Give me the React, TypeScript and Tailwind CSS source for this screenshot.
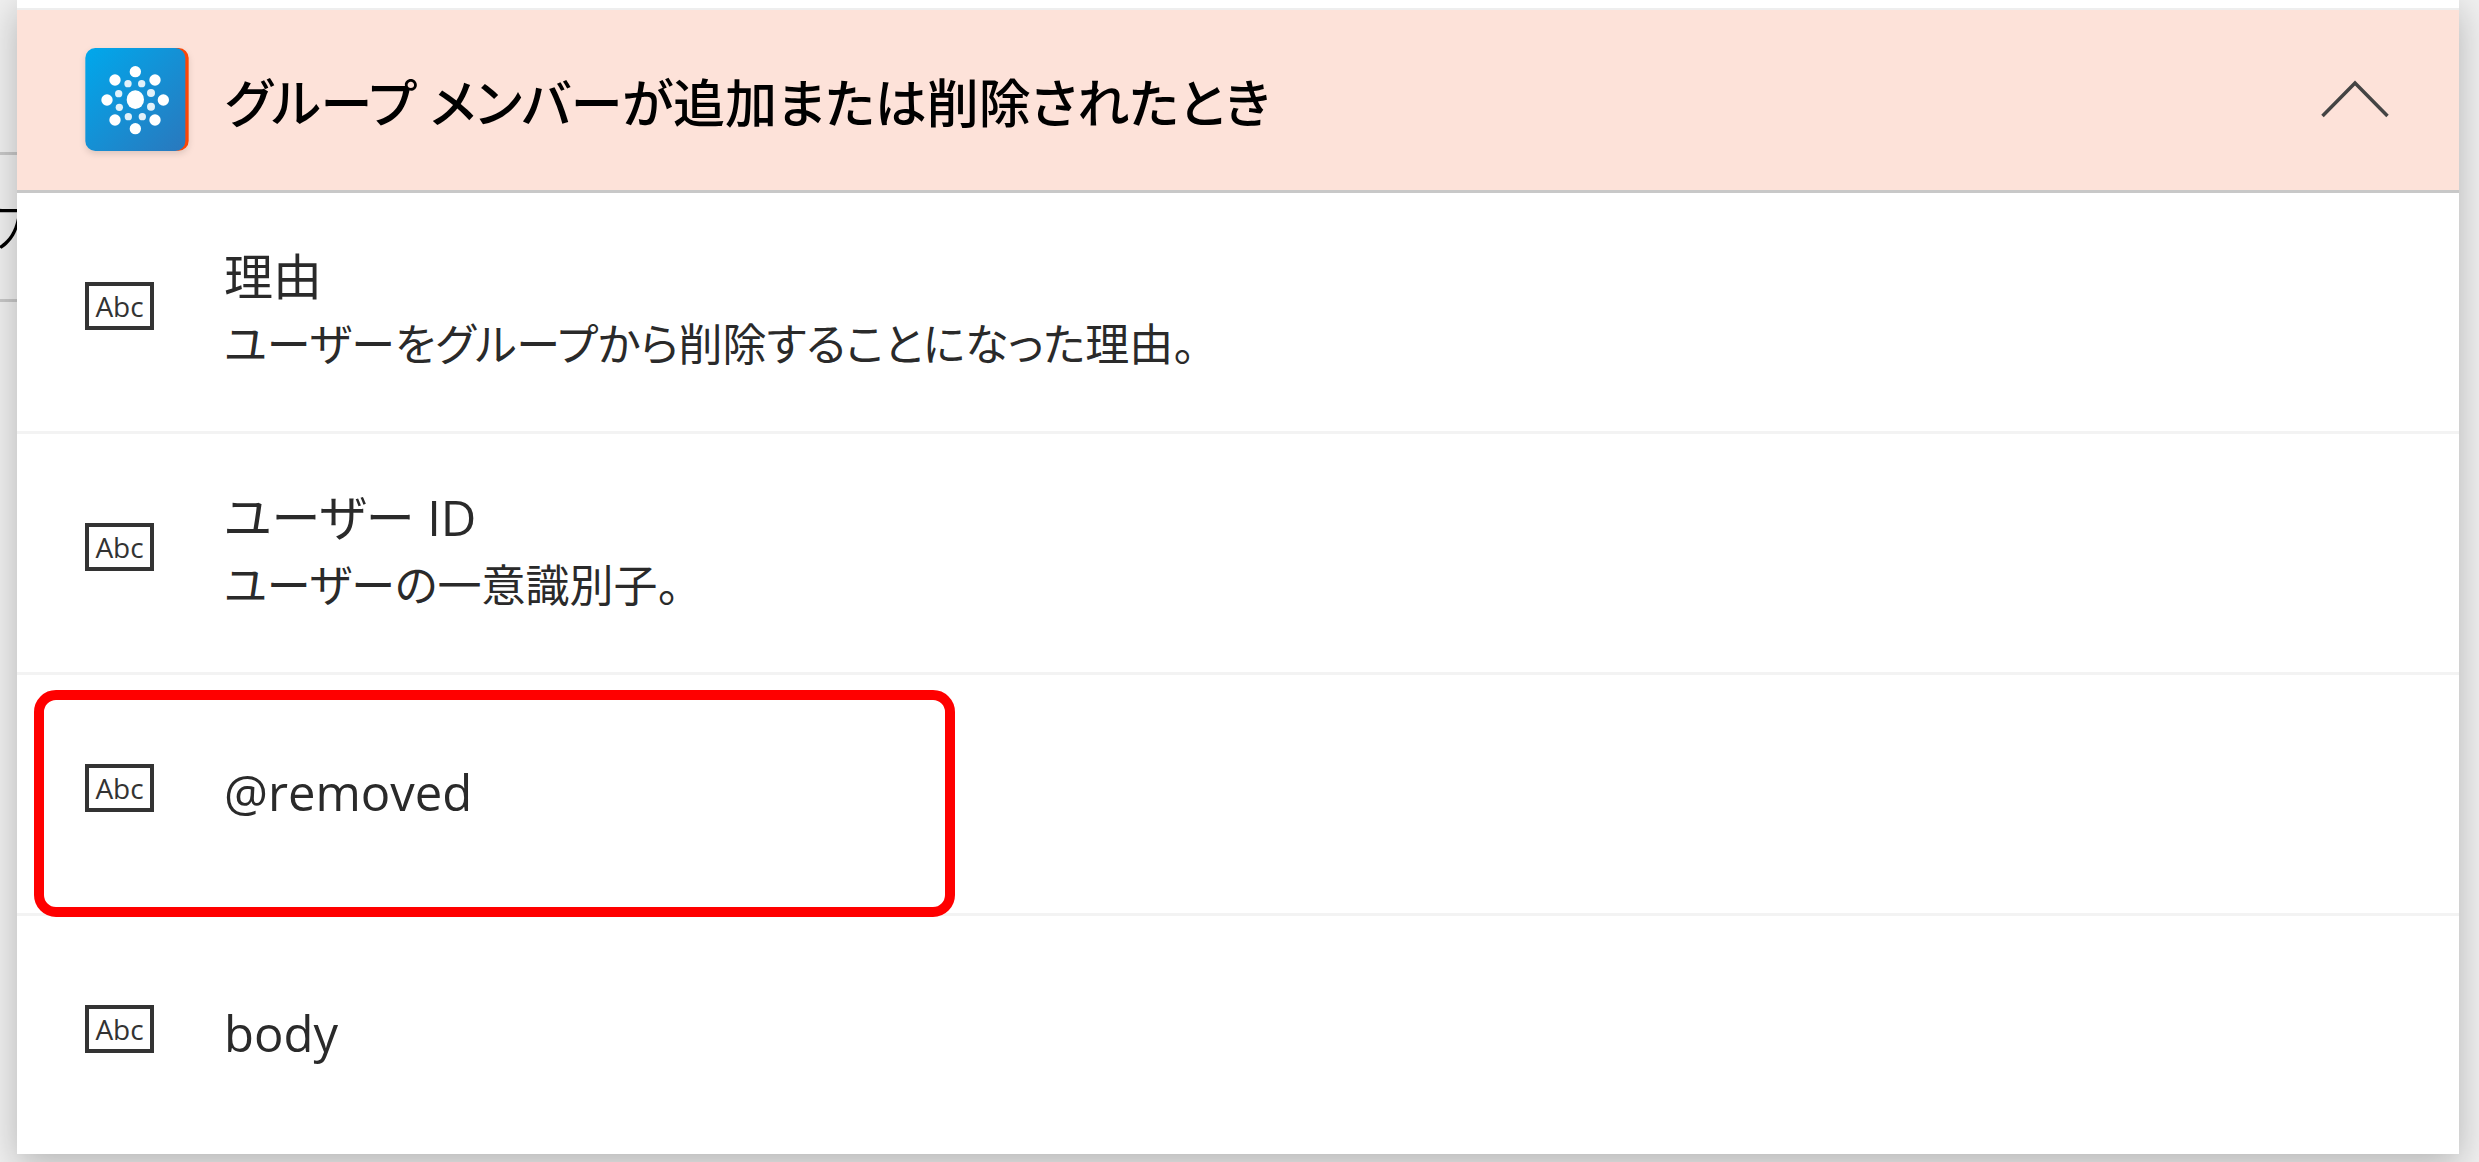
type Output = {
  id: string;
  title: string;
  description?: string;
  highlighted?: boolean;
};

const outputs: Output[] = [
  {
    id: 'reason',
    title: '理由',
    description: 'ユーザーをグループから削除することになった理由。',
  },
  { id: 'user-id', title: 'ユーザー ID', description: 'ユーザーの一意識別子。' },
  { id: 'removed', title: '@removed', highlighted: true },
  { id: 'body', title: 'body' },
];

const GroupsLogo = () => (
  <svg viewBox="78 54 310 309" className="h-[103px] w-26 shrink-0 drop-shadow-md" aria-hidden="true">
    <defs>
      <linearGradient id="logo-blue" x1="0" y1="0" x2="1" y2="1">
        <stop offset="0" stopColor="#00a8ec" />
        <stop offset="1" stopColor="#2a78bd" />
      </linearGradient>
    </defs>
    <rect x="88" y="54" width="300" height="308" rx="30" fill="#fa4606" />
    <rect x="78" y="54" width="300" height="309" rx="30" fill="url(#logo-blue)" />
    <g fill="#fff">
      <ellipse cx="228" cy="209" rx="26" ry="28" />
      <circle cx="228" cy="125" r="17" />
      <circle cx="287" cy="150" r="17" />
      <circle cx="312" cy="210" r="17" />
      <circle cx="287" cy="270" r="17" />
      <circle cx="228" cy="296" r="17" />
      <circle cx="167" cy="270" r="17" />
      <circle cx="143" cy="210" r="17" />
      <circle cx="167" cy="150" r="17" />
    </g>
    <g fill="#fff" fillOpacity="0.88">
      <circle cx="206" cy="161" r="11" />
      <circle cx="247" cy="161" r="11" />
      <circle cx="275" cy="189" r="12" />
      <circle cx="275" cy="230" r="12" />
      <circle cx="249" cy="260" r="11" />
      <circle cx="207" cy="260" r="11" />
      <circle cx="180" cy="232" r="11" />
      <circle cx="178" cy="191" r="11" />
    </g>
  </svg>
);

const ChevronUp = () => (
  <svg viewBox="0 0 68 38" className="h-[38px] w-17 shrink-0" fill="none" aria-hidden="true">
    <path d="M1.5 36 34 3l32.500 33" stroke="#444" strokeWidth="3.500" />
  </svg>
);

const TextTypeIcon = () => (
  <span
    aria-hidden="true"
    className="mb-3 flex h-12 w-[69px] shrink-0 items-center justify-center border-4 border-[#333] text-[28px] leading-none text-[#333]"
  >
    Abc
  </span>
);

const OutputRow = ({ output }: { output: Output }) => (
  <li className="relative border-b-3 border-[#f3f3f3] last:border-b-0">
    <button type="button" className="flex min-h-[238px] w-full items-center gap-[70px] px-17 text-left">
      <TextTypeIcon />
      <span className="flex flex-col pb-1 text-[49px] leading-[68px] text-[#2a2a2a]">
        <span>{output.title}</span>
        {output.description && <span className="text-[44px]">{output.description}</span>}
      </span>
    </button>
    {output.highlighted && (
      <span className="pointer-events-none absolute top-[15px] left-[17px] z-10 h-[227px] w-[921px] rounded-[22px] border-10 border-[#ff0000]" />
    )}
  </li>
);

export default function App() {
  return (
    <div className="relative min-h-screen overflow-hidden bg-[#f0f0f0] pr-5 pb-2 pl-[17px] font-['Open_Sans','Noto_Sans_CJK_JP',sans-serif] font-normal [font-feature-settings:'palt']">
      {/* field that the panel covers */}
      <div className="absolute top-[152px] left-0 h-[150px] w-20 border-y-3 border-[#c8c8c8] pt-8">
        <span className="-ml-2 block text-[64px] leading-[72px] font-light text-black">カ</span>
      </div>
      <section className="relative bg-white pt-2 shadow-[0_10px_34px_rgba(0,0,0,0.25)]">
        <button
          type="button"
          aria-expanded="true"
          className="flex h-[185px] w-full items-center border-t-2 border-b-3 border-t-[#eee] border-b-[#c8c8c8] bg-[#fde2d9] pr-[70px] pb-0.5 pl-17 text-left"
        >
          <GroupsLogo />
          <span className="ml-9 flex-1 pt-2 text-[52px] leading-[72px] font-medium text-black">
            グループ メンバーが追加または削除されたとき
          </span>
          <ChevronUp />
        </button>
        <ul>
          {outputs.map((output) => (
            <OutputRow key={output.id} output={output} />
          ))}
        </ul>
      </section>
    </div>
  );
}
